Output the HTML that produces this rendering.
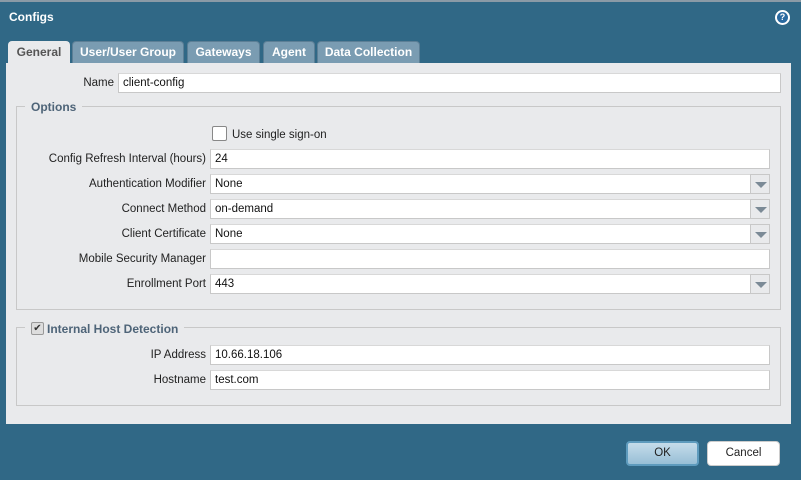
<!DOCTYPE html>
<html><head><meta charset="utf-8"><style>
*{box-sizing:border-box;margin:0;padding:0}
body{width:801px;height:480px;overflow:hidden;background:#306886;font-family:"Liberation Sans",Arial,sans-serif;font-size:11.5px;color:#222;position:relative;white-space:nowrap}
.a{position:absolute}
.title{left:9px;top:10px;color:#fff;font-weight:bold;font-size:12px}
.help{left:775px;top:10px;width:15px;height:15px;border-radius:50%;background:#fff;}
.help i{position:absolute;left:2px;top:2px;width:11px;height:11px;border-radius:50%;background:#2a6aa0;color:#fff;font-style:normal;font-weight:bold;font-size:9px;line-height:11px;text-align:center}
.tab{top:41px;height:22px;background:#7a9cb2;border:1px solid #5c7f96;border-bottom:none;border-radius:4px 4px 0 0;color:#fff;font-weight:bold;text-align:center;line-height:21px;font-size:12px}
.tab.on{background:#e9eaec;color:#555;height:23px;border-color:#e9eaec}
.panel{left:6px;top:63px;width:785px;height:361px;background:#e9eaec}
.in{height:20px;background:#fff;border:1px solid #c8c8c8;border-top-color:#d8d8d8;padding-left:4px;line-height:19px;color:#111}
.lbl{width:200px;text-align:right;line-height:21px;color:#222}
.dd{width:20px;height:20px;background:#e9eaec;border:1px solid #c8c8c8}
.dd:after{content:"";position:absolute;left:4px;top:7px;border-left:6px solid transparent;border-right:6px solid transparent;border-top:6px solid #7b8a96}
.fs{border:1px solid #c8c8c8}
.lg{background:#e9eaec;padding:0 6px;color:#4e6478;font-weight:bold;font-size:12px}
.btn{height:25px;border-radius:4px;text-align:center;line-height:21px;color:#222}
</style></head><body>
<div class="a" style="left:0;top:0;width:801px;height:2px;background:#8a9aa6"></div>
<div class="a title">Configs</div>
<div class="a help"><i>?</i></div>
<div class="a tab on" style="left:8px;width:62px">General</div>
<div class="a tab" style="left:72px;width:112px">User/User Group</div>
<div class="a tab" style="left:187px;width:73px">Gateways</div>
<div class="a tab" style="left:263px;width:52px">Agent</div>
<div class="a tab" style="left:317px;width:103px">Data Collection</div>
<div class="a panel"></div>
<div class="a lbl" style="left:-86px;top:73px">Name</div>
<div class="a in" style="left:118px;top:73px;width:663px">client-config</div>

<div class="a fs" style="left:16px;top:106px;width:765px;height:204px"></div>
<div class="a lg" style="left:25px;top:100px">Options</div>
<div class="a" style="left:212px;top:126px;width:15px;height:15px;background:#fff;border:1px solid #888;border-radius:2px"></div>
<div class="a" style="left:232px;top:127px;line-height:16px">Use single sign-on</div>

<div class="a lbl" style="left:6px;top:149px">Config Refresh Interval (hours)</div>
<div class="a in" style="left:210px;top:149px;width:560px">24</div>
<div class="a lbl" style="left:6px;top:174px">Authentication Modifier</div>
<div class="a in" style="left:210px;top:174px;width:541px">None</div><div class="a dd" style="left:750px;top:174px"></div>
<div class="a lbl" style="left:6px;top:199px">Connect Method</div>
<div class="a in" style="left:210px;top:199px;width:541px">on-demand</div><div class="a dd" style="left:750px;top:199px"></div>
<div class="a lbl" style="left:6px;top:224px">Client Certificate</div>
<div class="a in" style="left:210px;top:224px;width:541px">None</div><div class="a dd" style="left:750px;top:224px"></div>
<div class="a lbl" style="left:6px;top:249px">Mobile Security Manager</div>
<div class="a in" style="left:210px;top:249px;width:560px"></div>
<div class="a lbl" style="left:6px;top:274px">Enrollment Port</div>
<div class="a in" style="left:210px;top:274px;width:541px">443</div><div class="a dd" style="left:750px;top:274px"></div>

<div class="a fs" style="left:16px;top:327px;width:765px;height:79px"></div>
<div class="a lg" style="left:25px;top:322px;padding-left:22px">Internal Host Detection</div>
<div class="a" style="left:31px;top:322px;width:13px;height:13px;background:#ddd;border:1px solid #999;border-radius:2px;font-size:10px;line-height:11px;text-align:center;color:#333">✔</div>
<div class="a lbl" style="left:6px;top:345px">IP Address</div>
<div class="a in" style="left:210px;top:345px;width:560px">10.66.18.106</div>
<div class="a lbl" style="left:6px;top:370px">Hostname</div>
<div class="a in" style="left:210px;top:370px;width:560px">test.com</div>

<div class="a btn" style="left:626px;top:441px;width:73px;background:linear-gradient(#c5dcea,#98bfd6);border:2px solid #5e9bbd">OK</div>
<div class="a btn" style="left:707px;top:441px;width:73px;background:#fff;border:1px solid #ccc;line-height:23px">Cancel</div>
</body></html>
